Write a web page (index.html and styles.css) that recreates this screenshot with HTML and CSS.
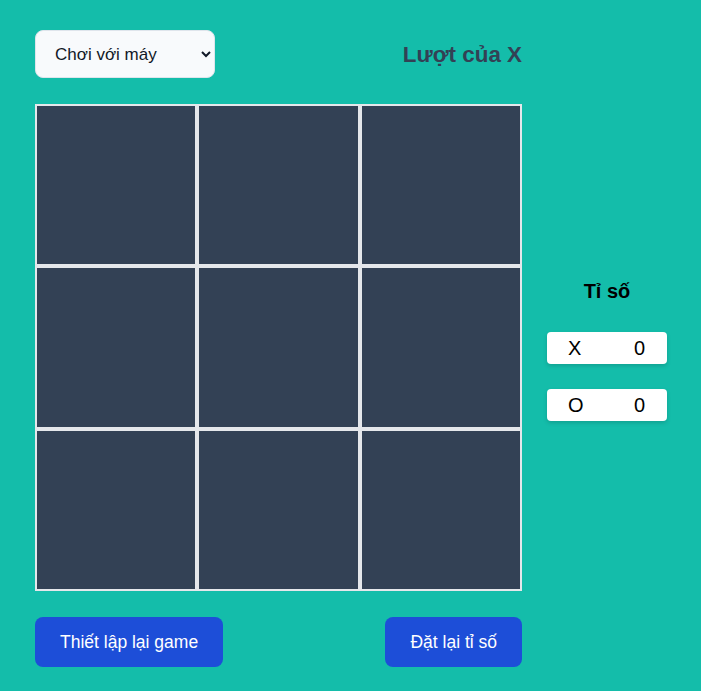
FILE: index.html
```html
<!DOCTYPE html>
<html lang="vi">
<head>
<meta charset="utf-8">
<title>Tic Tac Toe</title>
<link rel="stylesheet" href="styles.css">
</head>
<body>
<div class="app">
  <div class="top">
    <select class="mode">
      <option>Chơi với máy</option>
      <option>Chơi 2 người</option>
    </select>
    <div class="turn">Lượt của X</div>
  </div>
  <div class="middle">
    <div class="board">
      <div class="cell"></div><div class="cell"></div><div class="cell"></div>
      <div class="cell"></div><div class="cell"></div><div class="cell"></div>
      <div class="cell"></div><div class="cell"></div><div class="cell"></div>
    </div>
    <aside class="score">
      <div class="score-title">Tỉ số</div>
      <div class="score-row"><span>X</span><span>0</span></div>
      <div class="score-row"><span>O</span><span>0</span></div>
    </aside>
  </div>
  <div class="bottom">
    <button class="btn">Thiết lập lại game</button>
    <button class="btn">Đặt lại tỉ số</button>
  </div>
</div>
</body>
</html>
```
FILE: styles.css
```css
html, body {
  margin: 0;
  padding: 0;
  background: #14bdaa;
  font-family: "Liberation Sans", Arial, sans-serif;
}
.app {
  padding: 30px 0 0 35px;
}
.top {
  width: 487px;
  height: 48px;
  display: flex;
  justify-content: space-between;
  align-items: center;
}
.mode {
  width: 180px;
  height: 48px;
  padding: 0 10px 0 15px;
  border: 1px solid #dfe5ec;
  border-radius: 8px;
  background: #f8fafc;
  color: #111827;
  font-family: "Liberation Sans", Arial, sans-serif;
  font-size: 17px;
}
.turn {
  font-size: 22.4px;
  font-weight: bold;
  color: #334155;
  padding-top: 2px;
}
.middle {
  margin-top: 26px;
  display: flex;
  align-items: center;
}
.board {
  width: 487px;
  height: 487px;
  display: grid;
  grid-template-columns: repeat(3, 1fr);
  grid-template-rows: repeat(3, 1fr);
}
.cell {
  box-sizing: border-box;
  border: 2px solid #e5e7eb;
  background: #334155;
}
.score {
  margin-left: 25px;
  width: 120px;
  display: flex;
  flex-direction: column;
  gap: 25px;
  padding-top: 6px;
}
.score-title {
  text-align: center;
  font-weight: bold;
  font-size: 20px;
  color: #000;
  margin-bottom: 4px;
}
.score-row {
  height: 32px;
  background: #fff;
  border-radius: 4px;
  box-shadow: 0 2px 4px rgba(0,0,0,0.15);
  display: flex;
  justify-content: space-between;
  align-items: center;
  padding: 0 22px 0 21px;
  font-size: 20px;
  color: #000;
}
.bottom {
  margin-top: 26px;
  width: 487px;
  display: flex;
  justify-content: space-between;
}
.btn {
  height: 50px;
  padding: 0 25px;
  border: none;
  border-radius: 8px;
  background: #1d4ed8;
  color: #fff;
  font-family: "Liberation Sans", Arial, sans-serif;
  font-size: 17.5px;
}
```
